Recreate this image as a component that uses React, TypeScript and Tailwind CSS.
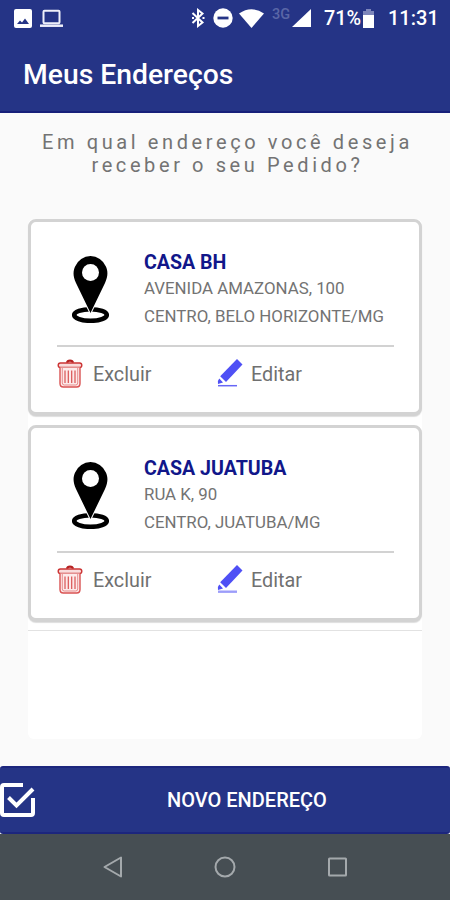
const addresses = [
  { name: 'CASA BH', street: 'AVENIDA AMAZONAS, 100', city: 'CENTRO, BELO HORIZONTE/MG' },
  { name: 'CASA JUATUBA', street: 'RUA K, 90', city: 'CENTRO, JUATUBA/MG' },
];

function PinIcon() {
  return (
    <svg className="h-[68px] w-[38px]" viewBox="0 0 38 68">
      <ellipse cx="19.500" cy="60" rx="16.300" ry="5.800" fill="none" stroke="#000" strokeWidth="4.600" />
      <path d="M19.500 58 5 28C1.500 20.500 2.300 15.500 4.100 11.500A16.600 16.600 0 0 1 34.900 11.500C36.700 15.500 37.500 20.500 34 28Z" fill="#000" stroke="#fff" strokeWidth="2" paintOrder="stroke" />
      <circle cx="19.500" cy="17.500" r="8.500" fill="#fff" />
    </svg>
  );
}

function TrashIcon() {
  return (
    <svg className="h-[29px] w-[26px]" viewBox="0 0 26 29" fill="none" stroke="#d95353" strokeWidth="1.400">
      <path d="M10 3.700C10.500 1 15.500 1 16 3.700" stroke="#b52222" strokeWidth="2.200" />
      <rect x="1.200" y="4" width="23.600" height="4.500" rx="2.200" stroke="#cc3434" fill="#f9dcdc" />
      <path d="M3 8.500V24.500Q3 28 6.300 28H19.700Q23 28 23 24.500V8.500" fill="#fdeaea" />
      <path d="M5.300 9V24Q5.300 26 7.300 26H18.700Q20.700 26 20.700 24V9" strokeWidth=".6" />
      <path d="M8 11.500V24M11.300 11.500V24M14.700 11.500V24M18 11.500V24" strokeWidth="1.200" />
    </svg>
  );
}

function PencilIcon({ soft }: { soft: boolean }) {
  return (
    <svg className="h-7 w-[26px]" viewBox="0 0 26 28" fill="#4f50f5">
      <path d="M20 0 25.500 5.500 9 23 3.200 17.200Z" />
      <path d="M2.300 19.500 6 23.500 1 25Q0 22 2.300 19.500Z" />
      <path d="M1 26.700H20" stroke={soft ? '#9c9dfa' : '#6767f6'} strokeWidth={soft ? 2.4 : 1.5} />
    </svg>
  );
}

function StatusBar() {
  return (
    <div className="flex h-9 items-center pl-[14px] text-white">
      <svg className="h-[19px] w-[18px]" viewBox="0 0 18 19">
        <rect width="18" height="19" rx="2" fill="#fff" />
        <path d="M3 15 6 11.500 8 13.500 11 9.500 15 15Z" fill="#253486" />
      </svg>
      <svg className="ml-2 h-[19px] w-[23px]" viewBox="0 0 23 19" fill="none" stroke="#eeeffa">
        <rect x="3.500" y="1.800" width="16" height="12.500" rx="1" strokeWidth="2" />
        <path d="M0 16.700H23" strokeWidth="2.500" />
      </svg>
      <svg className="ml-[128px] h-5 w-[14px]" viewBox="0 0 14 20" fill="none" stroke="#fff" strokeWidth="2">
        <path d="M1.500 5 11.500 14.500 7 18V2L11.500 5.500 1.500 15" />
        <path d="M1 10H3M11.500 10H13.500" />
      </svg>
      <svg className="ml-2 h-5 w-5" viewBox="0 0 20 20">
        <circle cx="10" cy="10" r="9.700" fill="#fff" />
        <path d="M4.500 10H15.500" stroke="#253486" strokeWidth="2.800" />
      </svg>
      <svg className="ml-1.5 h-[19px] w-[25px]" viewBox="0 0 25 19" fill="#fff">
        <path d="M0 4.500Q12.500-4 25 4.500L12.500 19Z" />
      </svg>
      <span className="ml-[8px] w-[20px] self-start pt-[7px] text-[14.500px] leading-4 font-medium text-[#5a66a6]">3G</span>
      <svg className="h-[18px] w-[19px]" viewBox="0 0 19 18" fill="#fff">
        <path d="M19 0V18H0Z" />
      </svg>
      <span className="ml-[13px] w-[39px] pt-px text-[19.800px] leading-5 font-medium">71%</span>
      <svg className="h-[19px] w-[11px]" viewBox="0 0 11 19">
        <path d="M3 0H8V2H11V6H0V2H3Z" fill="#7d86bb" />
        <path d="M0 6H11V19H0Z" fill="#fff" />
      </svg>
      <span className="ml-[14px] text-[20px] leading-5 font-medium">11:31</span>
    </div>
  );
}

export default function App() {
  return (
    <div className="flex h-[900px] w-[450px] flex-col overflow-hidden bg-[#fafafa] font-[Roboto,sans-serif]">
      <header className="h-[113px] shrink-0 border-b-2 border-[#17207a] bg-[#253486]">
        <StatusBar />
        <h1 className="pt-[21px] pl-[23px] text-[28.300px] leading-9 font-medium text-white">Meus Endereços</h1>
      </header>

      <main className="flex flex-1 flex-col px-7">
        <p className="h-[106px] pt-[18px] pl-[5px] text-center text-[20px] leading-[23px] tracking-[3.600px] whitespace-nowrap text-[#737373]">
          Em qual endereço você deseja
          <br />
          receber o seu Pedido?
        </p>

        <div className="h-[520px] rounded-md bg-white">
          {addresses.map((address, i) => (
            <div key={address.name} className="h-[206px]">
              <section className="h-[197px] rounded-lg border-[3px] border-b-[4px] border-[#d3d3d3] bg-white pr-[25px] pl-[26px] shadow-[0_1px_1px_#dedede]">
                <div className="flex h-[123px] pt-[33px]">
                  <div className="ml-[14px]">
                    <PinIcon />
                  </div>
                  <div className="ml-[35px] whitespace-nowrap text-[#737373]">
                    <h2 className="-mt-[4px] text-[19.600px] leading-[24px] font-bold text-[#11178a]">{address.name}</h2>
                    <p className="-mt-px text-[16.850px] leading-7">{address.street}</p>
                    <p className="text-[16.850px] leading-7">{address.city}</p>
                  </div>
                </div>
                <div className="flex h-[60px] border-t-2 border-[#d2d2d2] pt-[12px] text-[19.800px] leading-7 text-[#707070]">
                  <button className="flex w-[160px] items-start gap-[10px]">
                    <TrashIcon />
                    <span className="pt-[2px]">Excluir</span>
                  </button>
                  <button className="flex items-start gap-2">
                    <PencilIcon soft={i === 1} />
                    <span className="pt-[2px]">Editar</span>
                  </button>
                </div>
              </section>
            </div>
          ))}
          <div className="-mt-px h-px bg-[#e2e2e2]" />
        </div>
      </main>

      <button className="flex h-[68px] shrink-0 items-center rounded-[3px] border-y-2 border-[#1c267d] bg-[#253486] text-white">
        <svg className="h-9 w-[35px]" viewBox="0 0 35 36" fill="none" stroke="#fff" strokeWidth="4">
          <path d="M23 3H4Q2 3 2 5V31Q2 33 4 33H31Q33 33 33 31V16" />
          <path d="M8.500 15.500 16.500 23.500 33 7" />
        </svg>
        <span className="ml-[132px] text-[20px] font-medium">NOVO ENDEREÇO</span>
      </button>

      <nav className="flex h-[66px] shrink-0 items-center bg-[#464e53] pl-[102px]">
        <svg className="h-[22px] w-[248px]" viewBox="0 0 248 22" fill="none" stroke="#a4a9ac" strokeWidth="2">
          <path d="M2.500 11 19 1.500V20.500Z" strokeLinejoin="round" />
          <circle cx="123" cy="11" r="9.500" />
          <rect x="227" y="2.500" width="17" height="17" rx=".5" />
        </svg>
      </nav>
    </div>
  );
}
